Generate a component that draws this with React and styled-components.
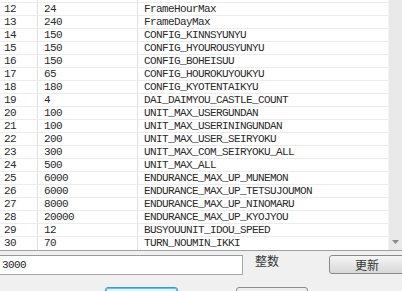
import React from "react";
import styled, { createGlobalStyle } from "styled-components";

const Global = createGlobalStyle`
  html, body { margin: 0; padding: 0; background: #f0f0f0; }
  body { width: 402px; height: 291px; overflow: hidden; }
  * { box-sizing: border-box; }
`;

const Window = styled.div`
  width: 402px;
  height: 291px;
  display: flex;
  flex-direction: column;
  background: #f0f0f0;
  overflow: hidden;
`;

const TableFrame = styled.div`
  height: 251px;
  display: flex;
  background: #ffffff;
  border-bottom: 1px solid #a0a0a0;
  flex-shrink: 0;
`;

const List = styled.div`
  flex: 1;
  display: flex;
  flex-direction: column;
  justify-content: flex-end;
  overflow: hidden;
`;

const Row = styled.div`
  display: grid;
  grid-template-columns: 38px 100px 1fr;
  height: 13px;
  flex-shrink: 0;
  border-bottom: 1px solid #ececec;
  &:last-child { border-bottom: none; }
`;

const Cell = styled.div`
  padding-left: ${(p) => (p.$first ? 4 : 6)}px;
  border-right: ${(p) => (p.$last ? "none" : "1px solid #e2e2e2")};
  font-family: "Liberation Mono", "DejaVu Sans Mono", monospace;
  font-size: 11px;
  letter-spacing: -0.6px;
  line-height: 12px;
  color: #2a2a2a;
  white-space: nowrap;
  overflow: hidden;
`;

const ScrollBar = styled.div`
  width: 14px;
  display: flex;
  flex-direction: column;
  justify-content: flex-end;
  align-items: center;
  background: #e9e9e9;
  border-left: 1px solid #f3f3f3;
`;

const ArrowBox = styled.div`
  width: 14px;
  height: 17px;
  display: flex;
  align-items: center;
  justify-content: center;
`;

const FormRow = styled.div`
  display: flex;
  align-items: flex-start;
  padding-top: 4px;
  height: 36px;
  flex-shrink: 0;
`;

const ValueInput = styled.input`
  flex-shrink: 0;
  margin-left: -2px;
  width: 245px;
  height: 20px;
  border: 1px solid #a8a8a8;
  border-top-color: #9a9a9a;
  background: #ffffff;
  padding: 0 0 0 3px;
  font-family: "Liberation Mono", "DejaVu Sans Mono", monospace;
  font-size: 11px;
  letter-spacing: -0.6px;
  color: #1e1e1e;
  outline: none;
`;

const TypeLabel = styled.span`
  flex-shrink: 0;
  white-space: nowrap;
  margin-left: 12px;
  margin-top: -1px;
  font-family: "Noto Sans CJK SC", sans-serif;
  font-size: 12px;
  line-height: 14px;
  color: #333333;
`;

const UpdateButton = styled.button`
  margin-left: 50px;
  width: 76px;
  height: 19px;
  flex-shrink: 0;
  white-space: nowrap;
  border: 1px solid #8a8a8a;
  border-radius: 3px;
  background: linear-gradient(#f6f6f6, #e6e6e6 50%, #d8d8d8);
  font-family: "Noto Sans CJK SC", sans-serif;
  font-size: 12px;
  line-height: 14px;
  color: #333333;
  padding: 0;
`;

const ButtonRow = styled.div`
  display: flex;
  padding-left: 105px;
  gap: 58px;
  flex-shrink: 0;
`;

const DialogButton = styled.button`
  flex-shrink: 0;
  width: ${(p) => p.$w}px;
  height: 22px;
  border: 1px solid ${(p) => (p.$primary ? "#3a9bd0" : "#8c8c8c")};
  border-radius: 3px;
  background: ${(p) => (p.$primary ? "#e3f2fb" : "#eeeeee")};
  box-shadow: ${(p) => (p.$primary ? "inset 0 0 0 1px #5cc3ee" : "none")};
  padding: 0;
`;

const rows = [
  ["11", "60", "FrameTime"],
  ["12", "24", "FrameHourMax"],
  ["13", "240", "FrameDayMax"],
  ["14", "150", "CONFIG_KINNSYUNYU"],
  ["15", "150", "CONFIG_HYOUROUSYUNYU"],
  ["16", "150", "CONFIG_BOHEISUU"],
  ["17", "65", "CONFIG_HOUROKUYOUKYU"],
  ["18", "180", "CONFIG_KYOTENTAIKYU"],
  ["19", "4", "DAI_DAIMYOU_CASTLE_COUNT"],
  ["20", "100", "UNIT_MAX_USERGUNDAN"],
  ["21", "100", "UNIT_MAX_USERININGUNDAN"],
  ["22", "200", "UNIT_MAX_USER_SEIRYOKU"],
  ["23", "300", "UNIT_MAX_COM_SEIRYOKU_ALL"],
  ["24", "500", "UNIT_MAX_ALL"],
  ["25", "6000", "ENDURANCE_MAX_UP_MUNEMON"],
  ["26", "6000", "ENDURANCE_MAX_UP_TETSUJOUMON"],
  ["27", "8000", "ENDURANCE_MAX_UP_NINOMARU"],
  ["28", "20000", "ENDURANCE_MAX_UP_KYOJYOU"],
  ["29", "12", "BUSYOUUNIT_IDOU_SPEED"],
  ["30", "70", "TURN_NOUMIN_IKKI"],
];

export default function App() {
  return (
    <Window>
      <Global />
      <TableFrame>
        <List>
          {rows.map(([id, val, name]) => (
            <Row key={id}>
              <Cell $first>{id}</Cell>
              <Cell>{val}</Cell>
              <Cell $last>{name}</Cell>
            </Row>
          ))}
        </List>
        <ScrollBar>
          <ArrowBox>
            <svg width="7" height="4" viewBox="0 0 7 4">
              <path d="M0 0 L7 0 L3.5 4 Z" fill="#8a8a8a" />
            </svg>
          </ArrowBox>
        </ScrollBar>
      </TableFrame>
      <FormRow>
        <ValueInput defaultValue="3000" />
        <TypeLabel>整数</TypeLabel>
        <UpdateButton>更新</UpdateButton>
      </FormRow>
      <ButtonRow>
        <DialogButton $primary $w={73} />
        <DialogButton $w={72} />
      </ButtonRow>
    </Window>
  );
}
